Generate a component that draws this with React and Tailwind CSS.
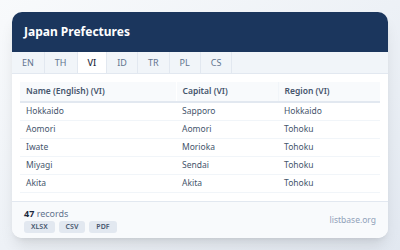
export default function App() {
  const rows = [
    ["Hokkaido", "Sapporo", "Hokkaido"],
    ["Aomori", "Aomori", "Tohoku"],
    ["Iwate", "Morioka", "Tohoku"],
    ["Miyagi", "Sendai", "Tohoku"],
    ["Akita", "Akita", "Tohoku"],
  ];
  const tabs = ["EN", "TH", "VI", "ID", "TR", "PL", "CS"];
  return (
    <div
      className="w-[400px] h-[250px] p-3 bg-gradient-to-br from-slate-50 to-slate-200"
      style={{ fontFamily: '"Noto Sans", sans-serif' }}
    >
      <div className="h-[226px] bg-white rounded-[10px] shadow-lg overflow-hidden flex flex-col">
        <div className="h-10 shrink-0 bg-[#1b365d] px-3 flex items-center text-white font-bold text-[12px]">
          Japan Prefectures
        </div>
        <div className="flex h-[22px] shrink-0 bg-slate-100 border-b border-slate-200">
          {tabs.map((t) => (
            <div
              key={t}
              className={
                t === "VI"
                  ? "px-2.5 flex items-center border-r border-slate-200 bg-white text-slate-800 font-medium text-[9px]"
                  : "px-2.5 flex items-center border-r border-slate-200 text-slate-500 text-[9px]"
              }
            >
              {t}
            </div>
          ))}
        </div>
        <div className="p-2 flex-1">
          <table className="w-full border-collapse text-[8.5px]">
            <thead>
              <tr className="bg-slate-50 border-b-2 border-slate-200">
                <th className="w-[156px] h-[20px] px-1.5 text-left font-semibold text-slate-600 border-r border-white">
                  Name (English) (VI)
                </th>
                <th className="w-[102px] h-[20px] px-1.5 text-left font-semibold text-slate-600 border-r border-slate-100">
                  Capital (VI)
                </th>
                <th className="w-[102px] h-[20px] px-1.5 text-left font-semibold text-slate-600">Region (VI)</th>
              </tr>
            </thead>
            <tbody>
              {rows.map((r) => (
                <tr key={r[0]} className="border-b border-slate-100">
                  {r.map((c, i) => (
                    <td key={i} className="h-[18px] px-1.5 text-slate-600">
                      {c}
                    </td>
                  ))}
                </tr>
              ))}
            </tbody>
          </table>
        </div>
        <div className="h-[37px] shrink-0 bg-slate-50 border-t border-slate-200 px-3 flex items-center justify-between">
          <div className="flex flex-col">
            <div className="text-[9px] leading-[12px] text-slate-500">
              <span className="font-bold text-slate-800">47</span> records
            </div>
            <div className="flex gap-1 mt-[1px]">
              {["XLSX", "CSV", "PDF"].map((b) => (
                <span
                  key={b}
                  className="h-3 px-[7px] rounded-[3px] bg-slate-200 text-slate-600 font-semibold text-[7px] leading-3"
                >
                  {b}
                </span>
              ))}
            </div>
          </div>
          <div className="text-[8.5px] text-slate-400">listbase.org</div>
        </div>
      </div>
    </div>
  );
}
